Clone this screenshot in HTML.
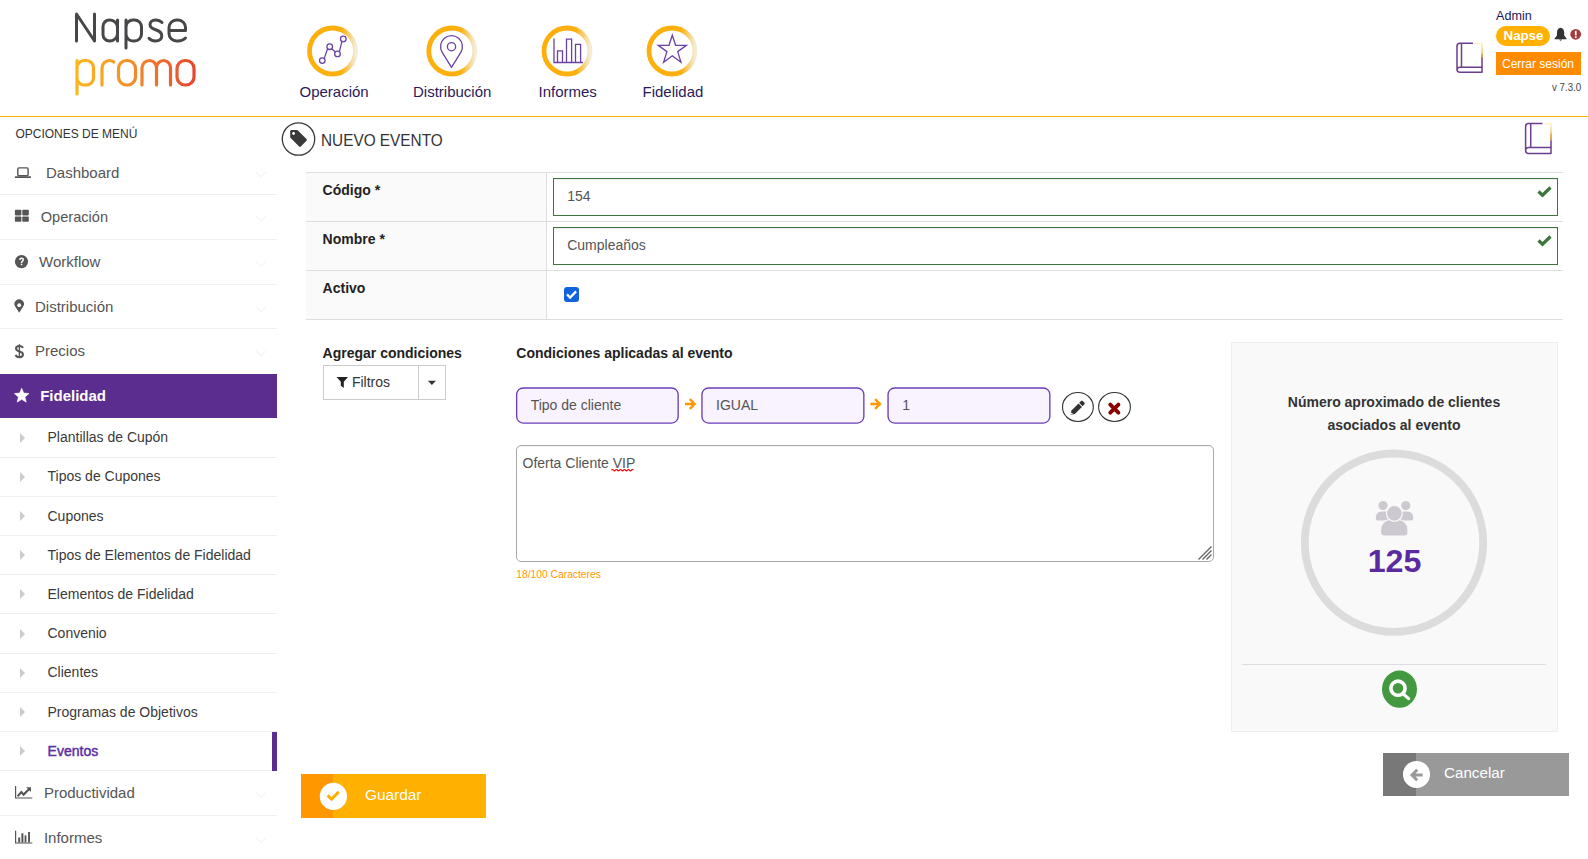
<!DOCTYPE html>
<html><head><meta charset="utf-8">
<style>
html,body{margin:0;padding:0;}
body{width:1588px;height:859px;overflow:hidden;background:#fff;position:relative;font-family:"Liberation Sans",sans-serif;}
.a{position:absolute;}
.t{position:absolute;line-height:1;white-space:nowrap;}
svg{position:absolute;overflow:visible;}
.sep{position:absolute;left:0;width:277px;height:1px;background:#f0f0f0;}
.ml{font-size:15px;color:#555;}
.sl{font-size:14px;color:#333;}
.tri{position:absolute;left:20px;width:0;height:0;border-top:5.2px solid transparent;border-bottom:5.2px solid transparent;border-left:5.8px solid #ccc;}
</style></head>
<body>
<!-- HEADER -->
<div class="a" style="left:0;top:116px;width:1588px;height:1px;background:#ffb000;"></div>

<!-- logo -->
<svg style="left:0;top:0" width="220" height="110" viewBox="0 0 220 110">
 <defs>
  <linearGradient id="lg" x1="75" y1="0" x2="196" y2="0" gradientUnits="userSpaceOnUse">
   <stop offset="0" stop-color="#fbb81d"/><stop offset="0.5" stop-color="#f28a2b"/><stop offset="1" stop-color="#e8432f"/>
  </linearGradient>
 </defs>
 <g fill="none" stroke="#47474a" stroke-width="3" stroke-linecap="round" stroke-linejoin="round">
  <path d="M76.5 41V14L94.5 41V14"/>
  <path d="M117.5 20V41M117.5 27.5A7.5 7.5 0 0 0 110 20H109.5A6.5 6.5 0 0 0 103 26.5V34.5A6.5 6.5 0 0 0 109.5 41H110A7.5 7.5 0 0 0 117.5 33.5"/>
  <path d="M126 48V20M126 27A7 7 0 0 1 133 20H134.5A7 7 0 0 1 141.5 27V34A7 7 0 0 1 134.5 41H133A7 7 0 0 1 126 34"/>
  <path d="M162 22.5C160 20.5 158 20 155.5 20C152 20 150 22 150 24.5C150 27.5 152.5 28.8 155.7 29.8C159.5 31 161.8 32.5 161.8 35.8C161.8 39 159.3 41 155.5 41C152.8 41 150.6 40 149 38.3"/>
  <path d="M169 30.5H185.5V27.5A7.5 7.5 0 0 0 178 20H176.5A7.5 7.5 0 0 0 169 27.5V33.5A7.5 7.5 0 0 0 176.5 41H178C181 41 183.5 40 185.5 38"/>
 </g>
 <g fill="none" stroke="url(#lg)" stroke-width="3.2" stroke-linecap="round" stroke-linejoin="round">
  <path d="M77 94V60.5M77 67.5A7 7 0 0 1 84 60.5H86.5A7 7 0 0 1 93.5 67.5V78A7 7 0 0 1 86.5 85H84A7 7 0 0 1 77 78"/>
  <path d="M102 85V68A7.5 7.5 0 0 1 109.5 60.5C111 60.5 112.5 61 113.7 62"/>
  <path d="M126.5 60.5H127.5A8 8 0 0 1 135.5 68.5V77A8 8 0 0 1 127.5 85H126.5A8 8 0 0 1 118.5 77V68.5A8 8 0 0 1 126.5 60.5Z"/>
  <path d="M142 85V68A7.5 7.5 0 0 1 149.5 60.5A7 7 0 0 1 156.5 67.5V85M156.5 67.5A7 7 0 0 1 163.5 60.5A7 7 0 0 1 170.5 67.5V85"/>
  <path d="M185 60.5H186A8 8 0 0 1 194 68.5V77A8 8 0 0 1 186 85H185A8 8 0 0 1 177 77V68.5A8 8 0 0 1 185 60.5Z"/>
 </g>
</svg>

<!-- nav circles -->
<svg style="left:0;top:0" width="720" height="110" viewBox="0 0 720 110">
 <defs>
  <linearGradient id="rg" x1="0" y1="0" x2="1" y2="0">
   <stop offset="0" stop-color="#fdb00d"/><stop offset="0.7" stop-color="#fdb00d"/><stop offset="1" stop-color="#f3ecd6"/>
  </linearGradient>
 </defs>
 <g fill="none" stroke="url(#rg)" stroke-width="4.8">
  <circle cx="332.5" cy="51" r="23"/>
  <circle cx="451.8" cy="51" r="23"/>
  <circle cx="567" cy="51" r="23"/>
  <circle cx="672" cy="51" r="23"/>
 </g>
 <g fill="none" stroke="#6a42a4" stroke-width="1.3">
  <path d="M324.2 58.4L327.6 48.8M331.8 48.7L335.4 52M339.4 51.3L341.9 41.6"/>
  <circle cx="322.3" cy="60.6" r="2.8"/>
  <circle cx="329.7" cy="46.7" r="2.8"/>
  <circle cx="337.5" cy="53.9" r="2.8"/>
  <circle cx="343.3" cy="38.9" r="2.8"/>
  <path d="M451.5 67.3L442.2 52.3A10.9 10.9 0 1 1 460.8 52.3Z" stroke-linejoin="round"/>
  <circle cx="451.5" cy="46.7" r="4.1"/>
  <path d="M554 38.5V62.5H583"/>
  <path d="M557.5 62.5V50.8H562.5V62.5M566.5 62.5V39.2H571.6V62.5M575.5 62.5V44.3H580.6V62.5"/>
  <path d="M672.3 35.2L675.6 45.3H686.4L677.7 51.6L681 62.2L672.3 55.7L663.6 62.2L666.9 51.6L658.2 45.3H669Z" stroke-linejoin="miter"/>
 </g>
</svg>
<div class="t" style="left:299.5px;top:84.3px;font-size:15px;color:#2b1a5a;">Operación</div>
<div class="t" style="left:413px;top:84.3px;font-size:15px;color:#2b1a5a;">Distribución</div>
<div class="t" style="left:538.5px;top:84.3px;font-size:15px;color:#2b1a5a;">Informes</div>
<div class="t" style="left:642.5px;top:84.3px;font-size:15px;color:#2b1a5a;">Fidelidad</div>

<!-- header right -->
<svg style="left:1450px;top:38px" width="40" height="40" viewBox="1450 38 40 40">
 <defs>
  <linearGradient id="bk" x1="0" y1="0" x2="0" y2="1">
   <stop offset="0" stop-color="#fff6cf"/><stop offset="1" stop-color="#f2b01e"/>
  </linearGradient>
 </defs>
 <g fill="none" stroke="#6c3d90" stroke-width="1.5" stroke-linejoin="round">
  <path d="M1473 43.3H1460A3 3 0 0 0 1457 46.3V69.3A3 3 0 0 0 1460 72.3H1482V67.2H1460A3 3 0 0 0 1457 70.2"/>
  <path d="M1461.5 43.3V67.2"/>
  <path d="M1482 54V67.2"/>
 </g>
 <path d="M1473 43.3H1482V57.5" fill="none" stroke="url(#bk)" stroke-width="1.6"/>
</svg>
<div class="t" style="left:1496px;top:10px;font-size:12.6px;color:#1d1456;">Admin</div>
<div class="a" style="left:1496px;top:26px;width:54px;height:19.5px;border-radius:10px;background:#ffb000;"></div>
<div class="t" style="left:1503.6px;top:29.3px;font-size:13.4px;font-weight:700;color:#fff;letter-spacing:-0.1px;">Napse</div>
<svg style="left:1553px;top:26px" width="30" height="16" viewBox="1553 26 30 16">
 <path d="M1560.5 27.8C1558.2 28.2 1557 30 1557 32.5V35.6L1554.6 38.4V39.3H1566.6V38.4L1564.2 35.6V32.5C1564.2 30 1563 28.2 1560.5 27.8Z" fill="#333"/>
 <path d="M1559.1 39.6A1.6 1.6 0 0 0 1562.1 39.6Z" fill="#333"/>
 <circle cx="1575.7" cy="34.3" r="5.4" fill="#a33d3d"/>
 <rect x="1574.9" y="30.8" width="1.7" height="4.6" fill="#fff"/>
 <rect x="1574.9" y="36.3" width="1.7" height="1.7" fill="#fff"/>
</svg>
<div class="a" style="left:1496px;top:52px;width:85px;height:23px;background:#ff8c00;"></div>
<div class="t" style="left:1502px;top:58.1px;font-size:12px;color:#fff;">Cerrar sesión</div>
<div class="t" style="left:1551.6px;top:82.9px;font-size:10px;color:#444;transform:scaleX(0.97);transform-origin:0 0;">v 7.3.0</div>

<!-- SIDEBAR -->
<div class="t" style="left:15.4px;top:127.5px;font-size:12px;color:#333;">OPCIONES DE MENÚ</div>
<div class="sep" style="top:194px"></div>
<div class="sep" style="top:239px"></div>
<div class="sep" style="top:284px"></div>
<div class="sep" style="top:328px"></div>
<div class="a" style="left:0;top:373.6px;width:277px;height:44px;background:#5b2d8e;"></div>
<div class="t" style="left:46px;top:164.9px;font-size:15px;color:#555;">Dashboard</div>
<div class="t" style="left:40.7px;top:210.2px;font-size:14.6px;color:#555;">Operación</div>
<div class="t" style="left:39px;top:254.3px;font-size:15px;color:#555;">Workflow</div>
<div class="t" style="left:35px;top:298.8px;font-size:15px;color:#555;">Distribución</div>
<div class="t" style="left:35px;top:342.8px;font-size:15px;color:#555;">Precios</div>
<div class="t" style="left:40.2px;top:388.0px;font-size:15px;font-weight:700;color:#fff;">Fidelidad</div>
<div class="t" style="left:47.5px;top:430.1px;font-size:14px;color:#3a3a3a;">Plantillas de Cupón</div>
<div class="tri" style="top:432.5px"></div>
<div class="sep" style="top:456.8px"></div>
<div class="t" style="left:47.5px;top:469.3px;font-size:14px;color:#3a3a3a;">Tipos de Cupones</div>
<div class="tri" style="top:471.7px"></div>
<div class="sep" style="top:495.9px"></div>
<div class="t" style="left:47.5px;top:508.5px;font-size:14px;color:#3a3a3a;">Cupones</div>
<div class="tri" style="top:510.9px"></div>
<div class="sep" style="top:535.0px"></div>
<div class="t" style="left:47.5px;top:547.7px;font-size:14px;color:#3a3a3a;">Tipos de Elementos de Fidelidad</div>
<div class="tri" style="top:550.1px"></div>
<div class="sep" style="top:574.2px"></div>
<div class="t" style="left:47.5px;top:586.9px;font-size:14px;color:#3a3a3a;">Elementos de Fidelidad</div>
<div class="tri" style="top:589.3px"></div>
<div class="sep" style="top:613.4px"></div>
<div class="t" style="left:47.5px;top:626.1px;font-size:14px;color:#3a3a3a;">Convenio</div>
<div class="tri" style="top:628.5px"></div>
<div class="sep" style="top:652.5px"></div>
<div class="t" style="left:47.5px;top:665.3px;font-size:14px;color:#3a3a3a;">Clientes</div>
<div class="tri" style="top:667.7px"></div>
<div class="sep" style="top:691.7px"></div>
<div class="t" style="left:47.5px;top:704.5px;font-size:14px;color:#3a3a3a;">Programas de Objetivos</div>
<div class="tri" style="top:706.9px"></div>
<div class="sep" style="top:730.8px"></div>
<div class="t" style="left:47.6px;top:743.7px;font-size:14px;color:#5a2ea2;-webkit-text-stroke:0.45px #5a2ea2;">Eventos</div>
<div class="tri" style="top:746.1px"></div>
<div class="sep" style="top:770.0px"></div>
<div class="a" style="left:272.4px;top:732px;width:4.6px;height:38.6px;background:#5b2d8e;"></div>
<div class="t" style="left:43.9px;top:784.6px;font-size:15px;color:#555;">Productividad</div>
<div class="sep" style="top:815px"></div>
<div class="t" style="left:43.9px;top:829.8px;font-size:15px;color:#555;">Informes</div>
<svg style="left:0;top:150px" width="40" height="710" viewBox="0 150 40 710">
 <g fill="none" stroke="#555" stroke-width="1.4">
  <rect x="17.8" y="167.9" width="10.3" height="7.9" rx="1"/>
 </g>
 <rect x="14.9" y="176.3" width="16.1" height="1.7" fill="#555"/>
 <g fill="#555">
  <rect x="14.9" y="209.8" width="6.5" height="5.6" rx="0.8"/>
  <rect x="22.3" y="209.8" width="6.5" height="5.6" rx="0.8"/>
  <rect x="14.9" y="216.4" width="6.5" height="5.4" rx="0.8"/>
  <rect x="22.3" y="216.4" width="6.5" height="5.4" rx="0.8"/>
  <circle cx="21.5" cy="261.6" r="6.6"/>
  <path d="M19.2 312.8L15.2 306.6A4.7 4.7 0 1 1 23.2 306.6Z"/>
  
 </g>
 <path d="M19.2 259.8C19.2 258.4 20.2 257.6 21.6 257.6C23 257.6 24 258.4 24 259.7C24 261.3 22.2 261.6 22.2 263H20.8C20.8 261 22.5 260.8 22.5 259.8C22.5 259.2 22.1 258.9 21.5 258.9C20.9 258.9 20.6 259.3 20.6 259.9Z" fill="#fff"/>
 <rect x="20.8" y="263.7" width="1.5" height="1.5" fill="#fff"/>
 <circle cx="19.2" cy="305.2" r="1.9" fill="#fff"/>
 <path d="M21.70 388.20L23.73 393.11L29.02 393.52L24.98 396.97L26.23 402.13L21.70 399.35L17.17 402.13L18.42 396.97L14.38 393.52L19.67 393.11Z" fill="#fff" stroke="#fff" stroke-width="0.6" stroke-linejoin="round"/>
 <g fill="none" stroke="#555" stroke-width="1.2">
  <path d="M15.6 786V798H32.3"/>
  <path d="M15.6 830.8V843H32.3"/>
 </g>
 <path d="M17.6 796.2L21.4 792L23.6 794.6L29.2 789" fill="none" stroke="#555" stroke-width="2.1"/>
 <path d="M26.2 787.2H31V792Z" fill="#555"/>
 <g fill="#555">
  <rect x="18.2" y="837.5" width="2" height="5"/>
  <rect x="21.4" y="833.3" width="2" height="9.2"/>
  <rect x="24.6" y="835.4" width="1.8" height="7.1"/>
  <rect x="28.1" y="832" width="1.9" height="10.5"/>
 </g>
</svg>
<svg style="left:10px;top:339.5px" width="20" height="22" viewBox="10 340 20 22"><path d="M19.4 344.2V358.1" stroke="#555" stroke-width="1.4"/><path d="M22.9 348C22.4 346.7 21.2 346 19.4 346C17.3 346 16 347.1 16 348.6C16 350.4 17.6 351 19.5 351.5C21.6 352 23 352.8 23 354.6C23 356.3 21.6 357.2 19.4 357.2C17.5 357.2 16.1 356.4 15.6 354.9" fill="none" stroke="#555" stroke-width="2"/></svg>

<!-- MAIN -->
<svg style="left:280px;top:120px" width="40" height="40" viewBox="280 120 40 40">
 <circle cx="298.5" cy="139" r="16.2" fill="none" stroke="#3a3a3a" stroke-width="1.3"/>
 <path d="M290.2 131.3A1.3 1.3 0 0 1 291.5 130H297.4L306.5 139.1A1.2 1.2 0 0 1 306.5 140.8L300.8 146.5A1.2 1.2 0 0 1 299.1 146.5L290.2 137.6Z" fill="#3a3a3a"/>
 <circle cx="293.6" cy="133.5" r="1.4" fill="#fff"/>
</svg>
<div class="t" style="left:320.9px;top:132.7px;font-size:16.6px;color:#333;transform:scaleX(0.925);transform-origin:0 0;">NUEVO EVENTO</div>
<svg style="left:1520px;top:118px" width="40" height="40" viewBox="1520 118 40 40">
 <defs>
  <linearGradient id="bk2" x1="0" y1="0" x2="0" y2="1">
   <stop offset="0" stop-color="#fff6cf"/><stop offset="1" stop-color="#f2b01e"/>
  </linearGradient>
 </defs>
 <g fill="none" stroke="#6c3d90" stroke-width="1.5" stroke-linejoin="round">
  <path d="M1542.6 123.6H1528.6A3 3 0 0 0 1525.6 126.6V150.5A3 3 0 0 0 1528.6 153.5H1551V147.6H1528.6A3 3 0 0 0 1525.6 150.6"/>
  <path d="M1530.7 123.6V147.6"/>
  <path d="M1551 133.6V147.6"/>
 </g>
 <path d="M1542.6 123.6H1551V140.6" fill="none" stroke="url(#bk2)" stroke-width="1.6"/>
</svg>
<div class="a" style="left:305.5px;top:172px;width:241px;height:148px;background:#fafafa;"></div>
<div class="a" style="left:305.5px;top:172px;width:1257px;height:1px;background:#ddd;"></div>
<div class="a" style="left:305.5px;top:221px;width:1257px;height:1px;background:#ddd;"></div>
<div class="a" style="left:305.5px;top:270px;width:1257px;height:1px;background:#ddd;"></div>
<div class="a" style="left:305.5px;top:319px;width:1257px;height:1px;background:#ddd;"></div>
<div class="a" style="left:546px;top:172px;width:1px;height:148px;background:#ddd;"></div>
<div class="t" style="left:322.6px;top:183.4px;font-size:14px;font-weight:700;color:#222;">Código *</div>
<div class="t" style="left:322.6px;top:232.4px;font-size:14px;font-weight:700;color:#222;">Nombre *</div>
<div class="t" style="left:322.6px;top:281.4px;font-size:14px;font-weight:700;color:#222;">Activo</div>
<div class="a" style="left:553px;top:178px;width:1003px;height:36px;border:1px solid #3c763d;background:#fff;box-shadow:inset 0 1px 1px rgba(0,0,0,.075);"></div>
<svg style="left:1535px;top:184px" width="20" height="15" viewBox="0 0 20 15"><path d="M3.5 7.5L7.5 11.2L15.5 3.5" fill="none" stroke="#3c763d" stroke-width="3.2" stroke-linecap="butt" stroke-linejoin="miter"/></svg>
<div class="a" style="left:553px;top:227px;width:1003px;height:36px;border:1px solid #3c763d;background:#fff;box-shadow:inset 0 1px 1px rgba(0,0,0,.075);"></div>
<svg style="left:1535px;top:233px" width="20" height="15" viewBox="0 0 20 15"><path d="M3.5 7.5L7.5 11.2L15.5 3.5" fill="none" stroke="#3c763d" stroke-width="3.2" stroke-linecap="butt" stroke-linejoin="miter"/></svg>
<div class="t" style="left:567.2px;top:189.3px;font-size:14px;color:#555;">154</div>
<div class="t" style="left:567.2px;top:238.3px;font-size:14px;color:#555;">Cumpleaños</div>
<div class="a" style="left:564px;top:287px;width:15px;height:15px;border-radius:3px;background:#1062dd;"></div>
<svg style="left:564px;top:287px" width="15" height="15" viewBox="0 0 15 15"><path d="M3 7.4L6.1 10.5L12.1 4.4" fill="none" stroke="#fff" stroke-width="2.3"/></svg>
<!-- CONDITIONS -->
<div class="t" style="left:322.6px;top:345.8px;font-size:14px;font-weight:700;color:#222;">Agregar condiciones</div>
<div class="t" style="left:516.3px;top:346.2px;font-size:14px;font-weight:700;color:#222;">Condiciones aplicadas al evento</div>
<div class="a" style="left:323px;top:365px;width:121px;height:33px;border:1px solid #ccc;background:#fff;"></div>
<div class="a" style="left:418px;top:365px;width:1px;height:34px;background:#ccc;"></div>
<svg style="left:330px;top:370px" width="120" height="25" viewBox="330 370 120 25">
 <path d="M336.6 377H348L343.8 381.7V388L340.8 385.8V381.7Z" fill="#222"/>
 <path d="M427.9 380.8H435.9L431.9 385Z" fill="#333"/>
</svg>
<div class="t" style="left:351.9px;top:375.1px;font-size:14px;color:#333;">Filtros</div>
<svg style="left:500px;top:380px" width="560" height="50" viewBox="500 380 560 50"><rect x="516.65" y="387.95" width="161.50" height="35.1" rx="6.5" fill="#f8f3fe" stroke="#6b3fb8" stroke-width="1.35"/><rect x="701.95" y="387.95" width="161.90" height="35.1" rx="6.5" fill="#f8f3fe" stroke="#6b3fb8" stroke-width="1.35"/><rect x="888.05" y="387.95" width="161.80" height="35.1" rx="6.5" fill="#f8f3fe" stroke="#6b3fb8" stroke-width="1.35"/></svg>
<div class="t" style="left:530.7px;top:398.4px;font-size:14px;color:#555;">Tipo de cliente</div>
<div class="t" style="left:716px;top:398.4px;font-size:14px;color:#555;">IGUAL</div>
<div class="t" style="left:902.3px;top:398.4px;font-size:14px;color:#555;">1</div>
<svg style="left:680px;top:395px" width="210" height="20" viewBox="680 395 210 20">
 <g fill="none" stroke="#ff9800" stroke-width="2.4" stroke-linejoin="miter">
  <path d="M685 404H694.5M689.8 399.2L694.6 404L689.8 408.8"/>
  <path d="M870.3 404H879.8M875.1 399.2L879.9 404L875.1 408.8"/>
 </g>
</svg>
<svg style="left:1058px;top:388px" width="80" height="40" viewBox="1058 388 80 40">
 <ellipse cx="1077.9" cy="407" rx="15.4" ry="14.5" fill="#fff" stroke="#333" stroke-width="1.1"/>
 <ellipse cx="1114.5" cy="407" rx="15.9" ry="14.5" fill="#fff" stroke="#333" stroke-width="1.1"/>
 <g transform="translate(1070.6 414.8) rotate(-45)" fill="#333">
  <path d="M0 0L3.6 -2.4H13.6V2.4H3.6Z"/>
  <path d="M14.5 -2.4H17.2A1.2 1.2 0 0 1 18.4 -1.2V1.2A1.2 1.2 0 0 1 17.2 2.4H14.5Z"/>
  <path d="M0.3 0L2.2 -1.2V1.2Z" fill="#fff"/>
 </g>
 <path d="M1110.3 404.6L1118.4 412.7M1118.4 404.6L1110.3 412.7" stroke="#8b0000" stroke-width="3.9" stroke-linecap="round"/>
</svg>
<div class="a" style="left:516px;top:445px;width:696px;height:114.5px;border:1px solid #aaa;border-radius:5px;background:#fff;box-shadow:inset 0 1px 1px rgba(0,0,0,.06);"></div>
<div class="t" style="left:522.5px;top:456.1px;font-size:14px;color:#555;">Oferta Cliente VIP</div>
<svg style="left:600px;top:466px" width="620" height="100" viewBox="600 466 620 100">
 <path d="M611.5 470.2Q612.5 468.8 613.5 470.2T615.5 470.2T617.5 470.2T619.5 470.2T621.5 470.2T623.5 470.2T625.5 470.2T627.5 470.2T629.5 470.2T631.5 470.2T633.5 470.2" fill="none" stroke="#e00" stroke-width="1.2"/>
 <g stroke="#666" stroke-width="1.4">
  <path d="M1198.5 559.5L1211.5 546.5M1202.5 559.5L1211.5 550.5M1206.5 559.5L1211.5 554.5"/>
 </g>
</svg>
<div class="t" style="left:516.2px;top:570.2px;font-size:10.3px;color:#ff9800;">18/100 Caracteres</div>
<div class="a" style="left:1231px;top:342px;width:325px;height:387.5px;border:1px solid #eee;background:#f9f9f9;"></div>
<div class="t" style="left:1094px;width:600px;text-align:center;top:395.3px;font-size:14px;font-weight:700;color:#333;">Número aproximado de clientes</div>
<div class="t" style="left:1094px;width:600px;text-align:center;top:418.0px;font-size:14px;font-weight:700;color:#333;">asociados al evento</div>
<svg style="left:1290px;top:440px" width="210" height="280" viewBox="1290 440 210 280">
 <circle cx="1394" cy="542.7" r="89.2" fill="none" stroke="#dcdcdc" stroke-width="7.8"/>
 <g fill="#cdc9d1" stroke="#f9f9f9" stroke-width="1.2">
  <circle cx="1383" cy="505.6" r="5.2"/>
  <circle cx="1405.8" cy="505.6" r="5.2"/>
  <path d="M1375.2 518.5V517A6 6 0 0 1 1381.2 511H1386A6 6 0 0 1 1392 517V521H1377.7A2.5 2.5 0 0 1 1375.2 518.5Z"/>
  <path d="M1413.8 518.5V517A6 6 0 0 0 1407.8 511H1403A6 6 0 0 0 1397 517V521H1411.3A2.5 2.5 0 0 0 1413.8 518.5Z"/>
  <path d="M1380.6 533V529.5A10 10 0 0 1 1390.6 519.5H1398A10 10 0 0 1 1408 529.5V533A3 3 0 0 1 1405 536H1383.6A3 3 0 0 1 1380.6 533Z"/>
  <circle cx="1394.4" cy="513.4" r="7.9"/>
 </g>
 <rect x="1242" y="664" width="304" height="1" fill="#ddd"/>
 <ellipse cx="1399.5" cy="689.2" rx="17.5" ry="18.6" fill="#43993f"/>
 <circle cx="1398" cy="688.2" r="7.1" fill="none" stroke="#fff" stroke-width="3.6"/>
 <path d="M1403.6 694.2L1408.6 698.6" stroke="#fff" stroke-width="3.2" stroke-linecap="round"/>
</svg>
<div class="t" style="left:1094.5px;width:600px;text-align:center;top:545.4px;font-size:32.2px;font-weight:700;color:#5b2aa0;">125</div>
<div class="a" style="left:301px;top:774px;width:185px;height:44px;background:#ffb000;"></div>
<div class="a" style="left:301px;top:774px;width:32px;height:44px;background:#ff9800;"></div>
<svg style="left:315px;top:780px" width="40" height="35" viewBox="315 780 40 35">
 <circle cx="333.4" cy="796.4" r="13.6" fill="#fff"/>
 <path d="M327.6 795.4L331.5 799.2L338.8 791.8" fill="none" stroke="#ffad00" stroke-width="3"/>
</svg>
<div class="t" style="left:365px;top:787.4px;font-size:15.4px;color:#fff;">Guardar</div>
<div class="a" style="left:1383px;top:753px;width:186px;height:43px;background:#999;"></div>
<div class="a" style="left:1383px;top:753px;width:33px;height:43px;background:#787878;"></div>
<svg style="left:1400px;top:758px" width="35" height="35" viewBox="1400 758 35 35">
 <circle cx="1416.5" cy="774.4" r="13.5" fill="#fff"/>
 <path d="M1422.6 775H1412.5M1417.2 769.8L1412 775L1417.2 780.2" fill="none" stroke="#999" stroke-width="3"/>
</svg>
<div class="t" style="left:1444px;top:764.6px;font-size:15.2px;color:#fff;">Cancelar</div>
<svg style="left:250px;top:150px" width="20" height="700" viewBox="250 150 20 700"><path d="M256 172.0L261 176.8L266 172.0M256 216.1L261 220.9L266 216.1M256 261.4L261 266.2L266 261.4M256 306.8L261 311.6L266 306.8M256 350.9L261 355.7L266 350.9M256 792.6L261 797.4L266 792.6M256 837.7L261 842.5L266 837.7" fill="none" stroke="#f0f0f0" stroke-width="1"/></svg>
</body></html>
